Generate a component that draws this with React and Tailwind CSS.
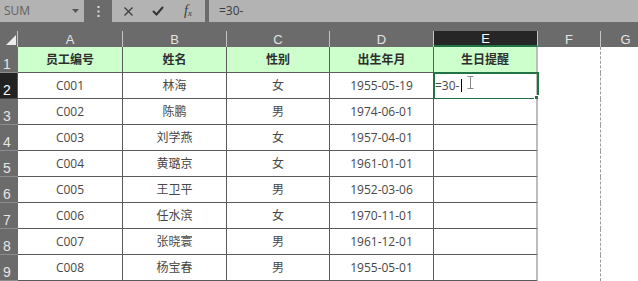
import React from 'react';

const cols = [
  { l: 'A', w: 'w-[105px]' },
  { l: 'B', w: 'w-[104px]' },
  { l: 'C', w: 'w-[103px]' },
  { l: 'D', w: 'w-[104px]' },
  { l: 'E', w: 'w-[104px]' },
  { l: 'F', w: 'w-[63px]' },
];

const headers = ['员工编号', '姓名', '性别', '出生年月', '生日提醒'];

const rows = [
  ['C001', '林海', '女', '1955-05-19'],
  ['C002', '陈鹏', '男', '1974-06-01'],
  ['C003', '刘学燕', '女', '1957-04-01'],
  ['C004', '黄璐京', '女', '1961-01-01'],
  ['C005', '王卫平', '男', '1952-03-06'],
  ['C006', '任水滨', '女', '1970-11-01'],
  ['C007', '张晓寰', '男', '1961-12-01'],
  ['C008', '杨宝春', '男', '1955-05-01'],
];

const cellFont = "font-['Open_Sans','Noto_Sans_CJK_SC',sans-serif]";

function FormulaBar() {
  return (
    <div className="flex h-[22px]">
      <div className={`w-[84px] bg-[#b3b3b3] flex items-center justify-between pl-[4px] pr-[5px] text-[12px] text-[#616161] ${cellFont}`}>
        <span>SUM</span>
        <svg width="7" height="4" viewBox="0 0 7 4"><path d="M0 0 L7 0 L3.5 4 Z" fill="#555" /></svg>
      </div>
      <div className="w-[28px] flex items-center justify-center">
        <svg width="3" height="11" viewBox="0 0 3 11">
          <rect x="0.5" y="0" width="2" height="2" fill="#dcdcdc" />
          <rect x="0.5" y="4.5" width="2" height="2" fill="#dcdcdc" />
          <rect x="0.5" y="9" width="2" height="2" fill="#dcdcdc" />
        </svg>
      </div>
      <div className="w-[93px] bg-[#b3b3b3] flex items-center pl-[1px]">
        <div className="w-[30px] flex justify-center">
          <svg width="9" height="9" viewBox="0 0 9 9"><path d="M0.5 0.5 L8.5 8.5 M8.5 0.5 L0.5 8.5" stroke="#404040" strokeWidth="1.4" /></svg>
        </div>
        <div className="w-[30px] flex justify-center">
          <svg width="12" height="10" viewBox="0 0 12 10"><path d="M1 5 L4.5 8.5 L11 1" fill="none" stroke="#333" strokeWidth="2" /></svg>
        </div>
        <div className="w-[30px] flex justify-center items-end font-['Liberation_Serif',serif] italic text-[#3a3a3a] leading-none">
          <span className="text-[14px]">f</span><span className="text-[9px]">x</span>
        </div>
      </div>
      <div className="w-[4px]" />
      <div className={`flex-1 bg-[#b3b3b3] flex items-center pl-[10px] text-[12px] text-[#3c3c3c] ${cellFont}`}>=30-</div>
    </div>
  );
}

function ColumnHeaders() {
  return (
    <div className="flex h-[16px] font-['Liberation_Sans',sans-serif] text-[13px] leading-none">
      <div className="w-[18px] border-r border-[#c4c4c4] relative">
        <svg className="absolute left-[6px] top-[4px]" width="10" height="10" viewBox="0 0 10 10"><path d="M0 10 L10 10 L10 0 Z" fill="#ececec" /></svg>
      </div>
      {cols.map((c) => (
        <div
          key={c.l}
          className={`${c.w} border-r border-[#c4c4c4] flex items-center justify-center ${c.l === 'E' ? 'bg-[#262626] text-white border-b-2 border-b-[#217346]' : 'text-[#e4e4e4]'}`}
        >
          {c.l}
        </div>
      ))}
      <div className="flex-1 flex items-center justify-center text-[#e4e4e4] pl-[12px]">G</div>
    </div>
  );
}

function Row({ n, cells, head }) {
  const active = n === 2;
  return (
    <div className={`flex h-[26px] ${cellFont} text-[12px] leading-none`}>
      <div
        className={`w-[18px] flex items-end pl-[3px] pb-[1px] font-['Liberation_Sans',sans-serif] text-[14px] border-b ${active ? 'bg-[#222] text-white border-r border-r-[#217346] border-b-[#444]' : 'bg-[#6b6b6b] text-[#e6e6e6] border-b-[#8d8d8d]'}`}
      >
        {n}
      </div>
      {cells.map((t, i) => (
        <div
          key={i}
          className={`${cols[i].w} border-b border-[#5a5a5a] ${i === 4 ? 'border-r-2 border-r-[#bdbdbd]' : 'border-r'} ${head ? 'bg-[#ccffcc] font-bold text-[#2e2e2e]' : 'bg-white text-[#474747]'} flex items-center justify-center relative`}
        >
          {t}
          {active && i === 4 && (
            <>
              <div className="absolute left-[1px] top-0 h-full flex items-center text-[#474747]">
                =30-<span className="w-px h-[13px] bg-black ml-[2px]" />
              </div>
              <div className="absolute -left-[1px] -top-[1px] w-[106px] h-[28px] border-2 border-[#217346]" />
              <div className="absolute -right-[3px] -bottom-[2px] w-[5px] h-[5px] bg-[#217346] border border-white" />
              <svg className="absolute left-[33px] top-[3px]" width="7" height="13" viewBox="0 0 7 13">
                <path d="M0.5 0.5 H6.5 M0.5 12.5 H6.5 M3.5 0.5 V12.5" stroke="#8a8a8a" strokeWidth="1" fill="none" />
              </svg>
            </>
          )}
        </div>
      ))}
      <div className="w-[63px] bg-white border-r border-dashed border-r-[#9c9c9c]" />
      <div className="flex-1 bg-white" />
    </div>
  );
}

export default function App() {
  return (
    <div className="w-[638px] h-[281px] overflow-hidden bg-[#6b6b6b]">
      <FormulaBar />
      <div className="h-[9px]" />
      <ColumnHeaders />
      <Row n={1} cells={headers} head />
      {rows.map((r, i) => (
        <Row key={i} n={i + 2} cells={[...r, '']} />
      ))}
    </div>
  );
}
